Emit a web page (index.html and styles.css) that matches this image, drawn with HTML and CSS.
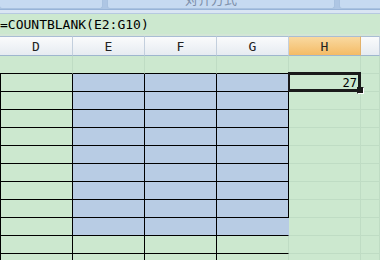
FILE: index.html
```html
<!DOCTYPE html>
<html lang="zh-CN">
<head>
<meta charset="utf-8">
<link rel="stylesheet" href="styles.css">
</head>
<body>
<div class="ribbon">
  <div class="grp g1"></div>
  <div class="grp g2"><div class="glabel">对齐方式</div></div>
  <div class="grp g3"></div>
</div>
<div class="band"></div>
<div class="fbar">=COUNTBLANK(E2:G10)</div>
<div class="gap"></div>
<div class="sheet">
  <div class="hd">D</div><div class="hd">E</div><div class="hd">F</div><div class="hd">G</div><div class="hd act">H</div><div class="hd"></div>

  <div class="c tb"></div><div class="c tb"></div><div class="c tb"></div><div class="c tb"></div><div class="c"></div><div class="c"></div>

  <div class="c t tl"></div><div class="c t b"></div><div class="c t b"></div><div class="c t b"></div><div class="c num">27<div class="sel"><div class="handle"></div></div></div><div class="c"></div>
  <div class="c t tl"></div><div class="c t b"></div><div class="c t b"></div><div class="c t b"></div><div class="c"></div><div class="c"></div>
  <div class="c t tl"></div><div class="c t b"></div><div class="c t b"></div><div class="c t b"></div><div class="c"></div><div class="c"></div>
  <div class="c t tl"></div><div class="c t b"></div><div class="c t b"></div><div class="c t b"></div><div class="c"></div><div class="c"></div>
  <div class="c t tl"></div><div class="c t b"></div><div class="c t b"></div><div class="c t b"></div><div class="c"></div><div class="c"></div>
  <div class="c t tl"></div><div class="c t b"></div><div class="c t b"></div><div class="c t b"></div><div class="c"></div><div class="c"></div>
  <div class="c t tl"></div><div class="c t b"></div><div class="c t b"></div><div class="c t b"></div><div class="c"></div><div class="c"></div>
  <div class="c t tl"></div><div class="c t b"></div><div class="c t b"></div><div class="c t b"></div><div class="c"></div><div class="c"></div>

  <div class="c t tl"></div><div class="c t b"></div><div class="c t b"></div><div class="c t b nrb"></div><div class="c"></div><div class="c"></div>
  <div class="c t tl"></div><div class="c t"></div><div class="c t"></div><div class="c t nrg"></div><div class="c"></div><div class="c"></div>
  <div class="c t tl"></div><div class="c t"></div><div class="c t"></div><div class="c"></div><div class="c"></div><div class="c"></div>
</div>
</body>
</html>
```
FILE: styles.css
```css
html, body {
  margin: 0;
  padding: 0;
  width: 380px;
  height: 260px;
  overflow: hidden;
  background: #cce8cf;
}

.ribbon {
  height: 10px;
  display: flex;
  gap: 4px;
  background: #aec6e4;
  overflow: hidden;
  border-bottom: 1px solid #98b4d8;
  box-sizing: border-box;
}

.grp {
  height: 9px;
  background: #c6daf1;
  border: 1px solid #a9c2e0;
  border-top: none;
  border-radius: 0 0 3px 3px;
  box-sizing: border-box;
  overflow: hidden;
}

.g1 { width: 104px; margin-left: -1px; }
.g2 { width: 228px; }
.g3 { flex: 1; margin-right: -3px; }

.glabel {
  margin-top: -8px;
  margin-left: 77px;
  font: 13px/13px "Noto Sans CJK SC", sans-serif;
  color: #7d8fa9;
  white-space: nowrap;
}

.band {
  height: 4px;
  background: #d9e5f3;
  border-bottom: 1px solid #b6c9e0;
  box-sizing: border-box;
}

.fbar {
  height: 20px;
  font: 13px/20px "DejaVu Sans Mono", monospace;
  color: #000;
  background: #cce8cf;
  white-space: nowrap;
  padding-left: 0;
  padding-top: 1px;
  box-sizing: border-box;
}

.gap {
  height: 2px;
  background: #d3e6d6;
}

.sheet {
  display: grid;
  grid-template-columns: 73px 72px 72px 72px 72px 19px;
  grid-template-rows: 20px;
  grid-auto-rows: 18px;
}

.hd {
  box-sizing: border-box;
  background: linear-gradient(#fafbfc, #e6ebf1);
  border-top: 1px solid #a9bdd4;
  border-bottom: 1px solid #9eb6ce;
  border-right: 1px solid #c3cfdd;
  font: 13px/18px "DejaVu Sans Mono", monospace;
  text-align: center;
  color: #222;
  padding-top: 1px;
}

.hd.act {
  background: linear-gradient(#f9d9a0, #f4bb66);
  border-right-color: #e3b26a;
}

.c {
  box-sizing: border-box;
  background: #cce8cf;
  border-right: 1px solid #bfdcc4;
  border-bottom: 1px solid #bfdcc4;
}

.tb { border-bottom-color: #000; }
.t { border-right-color: #000; border-bottom-color: #000; }
.tl { border-left: 1px solid #000; }
.b { background: #b8cce4; }
.nrb { border-right-color: #b8cce4; }
.nrg { border-right-color: #bfdcc4; }

.num {
  position: relative;
  font: 12px/17px "DejaVu Sans Mono", monospace;
  text-align: right;
  padding-right: 3px;
  padding-top: 1px;
  color: #000;
}

.sel {
  position: absolute;
  top: -2px;
  left: -1px;
  right: -1px;
  bottom: -1px;
  border: 3px solid #1a1a1a;
  border-left-width: 2px;
}

.handle {
  position: absolute;
  left: 67px;
  top: 12px;
  width: 5px;
  height: 5px;
  background: #1a1a1a;
  border: 1px solid #fff;
  border-top-color: transparent;
  border-left-color: transparent;
}
```
